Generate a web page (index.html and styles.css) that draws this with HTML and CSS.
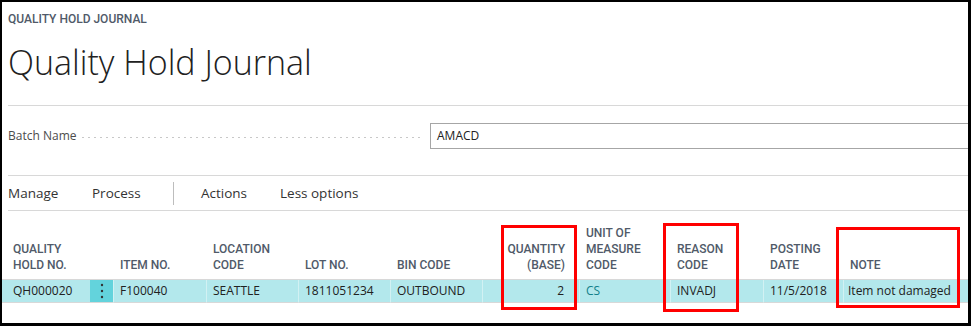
FILE: index.html
```html
<!DOCTYPE html>
<html>
<head>
<meta charset="utf-8">
<link rel="stylesheet" href="styles.css">
</head>
<body>
<div class="page">
  <div class="caption">QUALITY HOLD JOURNAL</div>
  <h1 class="title">Quality Hold Journal</h1>
  <div class="rule"></div>
  <div class="batch">
    <span class="batch-label">Batch Name</span>
    <span class="leader"></span>
    <div class="batch-input">AMACD</div>
  </div>
  <div class="actions">
    <span class="act act-manage">Manage</span>
    <span class="act act-process">Process</span>
    <span class="act-sep"></span>
    <span class="act act-actions">Actions</span>
    <span class="act">Less options</span>
  </div>
  <div class="grid">
    <div class="hd c1">QUALITY<br>HOLD NO.</div>
    <div class="hd c2"></div>
    <div class="hd">ITEM NO.</div>
    <div class="hd">LOCATION<br>CODE</div>
    <div class="hd">LOT NO.</div>
    <div class="hd">BIN CODE</div>
    <div class="hd right">QUANTITY<br>(BASE)</div>
    <div class="hd">UNIT OF<br>MEASURE<br>CODE</div>
    <div class="hd">REASON<br>CODE</div>
    <div class="hd">POSTING<br>DATE</div>
    <div class="hd">NOTE</div>

    <div class="cell c1">QH000020</div>
    <div class="cell btn"><svg width="4" height="16" viewBox="0 0 4 16"><circle cx="2" cy="2" r="1.2" fill="#333"/><circle cx="2" cy="8" r="1.2" fill="#333"/><circle cx="2" cy="14" r="1.2" fill="#333"/></svg></div>
    <div class="cell">F100040</div>
    <div class="cell">SEATTLE</div>
    <div class="cell">1811051234</div>
    <div class="cell">OUTBOUND</div>
    <div class="cell right">2</div>
    <div class="cell link">CS</div>
    <div class="cell">INVADJ</div>
    <div class="cell">11/5/2018</div>
    <div class="cell last">Item not damaged</div>
  </div>
  <div class="mark mark-qty"></div>
  <div class="mark mark-reason"></div>
  <div class="mark mark-note"></div>
</div>
</body>
</html>
```
FILE: styles.css
```css
html, body {
  margin: 0;
  padding: 0;
  background: #fff;
}
.page {
  position: relative;
  width: 971px;
  height: 326px;
  box-sizing: border-box;
  border-style: solid;
  border-color: #000;
  border-width: 2px 3px 3px 2px;
  overflow: hidden;
  background: #fff;
  font-family: "Open Sans", "Noto Sans", sans-serif;
  color: #212121;
}
.caption {
  margin: 10px 0 0 6px;
  font-family: Roboto, sans-serif;
  font-weight: 500;
  font-size: 12px;
  line-height: 14px;
  color: #505a69;
}
.title {
  margin: 16px 0 0 6px;
  font-weight: 300;
  font-size: 34px;
  line-height: 40px;
  color: #212121;
}
.rule {
  margin: 23px 0 0 6px;
  height: 1px;
  background: #d8d8d8;
}
.batch {
  display: flex;
  align-items: flex-start;
  height: 70px;
  box-sizing: border-box;
  padding-top: 17px;
  margin-left: 6px;
  border-bottom: 1px solid #d8d8d8;
}
.batch-label {
  font-size: 12px;
  line-height: 26px;
  color: #4c4c4c;
  width: 74px;
  flex: none;
}
.leader {
  width: 338px;
  flex: none;
  height: 1px;
  margin-top: 14px;
  background: repeating-linear-gradient(90deg, #c8c8c8 0 2px, transparent 2px 6px);
}
.batch-input {
  flex: 1;
  margin-left: 10px;
  height: 24px;
  border: 1px solid #a6a6a6;
  border-right: none;
  font-size: 12px;
  line-height: 24px;
  padding-left: 6px;
  color: #212121;
}
.actions {
  display: flex;
  align-items: center;
  height: 34px;
  margin-left: 6px;
  border-bottom: 1px solid #d8d8d8;
  font-size: 13.5px;
  color: #333;
}
.act-manage { width: 84px; }
.act-process { width: 81px; }
.act-sep {
  width: 1px;
  height: 23px;
  background: #bdbdbd;
  margin-right: 27px;
}
.act-actions { width: 79px; }
.grid {
  display: grid;
  grid-template-columns: 88px 24px 93px 92px 92px 92px 97px 91px 93px 80px 1fr;
}
.hd {
  height: 69px;
  box-sizing: border-box;
  display: flex;
  flex-direction: column;
  justify-content: flex-end;
  padding: 0 6px 6px 6px;
  font-family: Roboto, sans-serif;
  font-weight: 500;
  font-size: 12px;
  line-height: 16px;
  color: #505a69;
  border-bottom: 1px solid #d8d8d8;
}
.hd.c1 { padding-left: 11px; }
.hd.right { text-align: right; padding-right: 15px; }
.cell {
  height: 22px;
  line-height: 22px;
  background: #b3e8ec;
  border-right: 1px solid #d2f1f3;
  border-bottom: 1px solid #d8d8d8;
  padding: 0 6px;
  font-size: 12px;
  color: #212121;
  white-space: nowrap;
}
.cell.c1 { padding-left: 11px; border-right: none; }
.cell.btn {
  background: #63d3dc;
  display: flex;
  align-items: center;
  justify-content: center;
  padding: 0;
}
.cell.right { text-align: right; padding-right: 15px; }
.cell.link { color: #12808a; }
.cell.last { border-right: none; padding-left: 4px; }
.mark {
  position: absolute;
  border: 3px solid #f00;
  box-sizing: border-box;
}
.mark-qty { left: 499px; top: 223px; width: 76px; height: 85px; }
.mark-reason { left: 661px; top: 221px; width: 76px; height: 89px; }
.mark-note { left: 834px; top: 225px; width: 124px; height: 81px; }
```
